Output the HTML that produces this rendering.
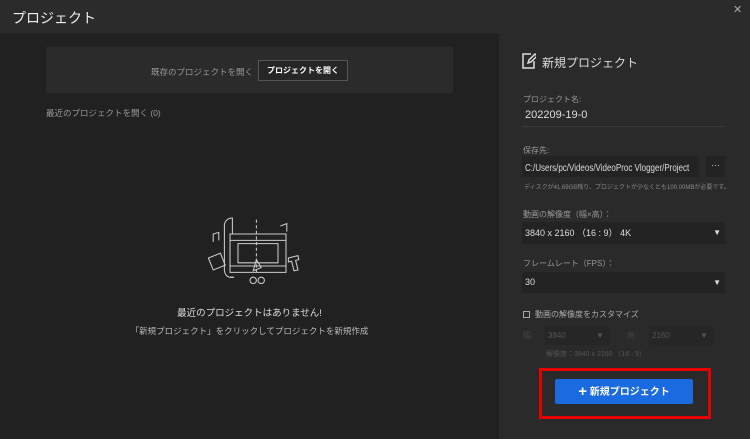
<!DOCTYPE html><html><head><meta charset="utf-8"><style>
*{margin:0;padding:0;box-sizing:border-box}
body{width:750px;height:439px;background:#212121;font-family:"Liberation Sans","Noto Sans CJK JP",sans-serif;color:#ccc;position:relative;overflow:hidden}
.a{position:absolute}
</style></head><body>
<div class="a" style="left:0;top:0;width:750px;height:33px;background:#2b2b2b"></div>
<div class="a" style="left:12px;top:8px;font-size:14px;color:#eee">プロジェクト</div>
<div class="a" style="left:733px;top:3px;font-size:11px;color:#aaa">✕</div>
<div class="a" style="left:499px;top:33px;width:251px;height:406px;background:#2a2a2a"></div>

<div class="a" style="left:46px;top:47px;width:407px;height:46px;background:#2b2b2b"></div>
<div class="a" style="left:151px;top:66px;font-size:8.5px;color:#999;white-space:nowrap">既存のプロジェクトを開く</div>
<div class="a" style="left:258px;top:60px;width:90px;height:21px;border:1px solid #555;background:#262626;color:#fff;font-size:8px;font-weight:bold;text-align:center;line-height:19px">プロジェクトを開く</div>
<div class="a" style="left:46px;top:107px;font-size:8.5px;color:#999">最近のプロジェクトを開く (0)</div>

<svg class="a" style="left:190px;top:210px" width="120" height="80" viewBox="0 0 140 100" fill="none" stroke="#ccc" stroke-width="1.3">
<path d="M45 30 h70 v48 h-70z"/><path d="M45 38h70M45 70h70"/><path d="M55 42h50v24h-50z"/>
<path d="M48 30 V10 q-8 0 -10 8 v58 q2 10 12 8 h-5"/><path d="M78 12v66" stroke-dasharray="4 3"/>
<path d="M78 62 l6 10 l-10 4z"/><circle cx="74" cy="88" r="4"/><circle cx="84" cy="88" r="4"/>
<path d="M18 60 l15 -6 l6 15 l-15 6z"/><path d="M118 60 l12 -3 l1 5 l-4 1 l3 12 l-5 1 l-3 -12 l-4 1z"/>
<path d="M24 40 v-10 l7 -2 v10"/><path d="M108 20 l8 -3 v10"/>
</svg>
<div class="a" style="left:0;width:499px;top:305px;text-align:center;font-size:9.5px;color:#ddd">最近のプロジェクトはありません!</div>
<div class="a" style="left:0;width:499px;top:325px;text-align:center;font-size:8.5px;color:#bbb">「新規プロジェクト」をクリックしてプロジェクトを新規作成</div>

<svg class="a" style="left:522px;top:53px" width="14" height="16" viewBox="0 0 14 16" fill="none" stroke="#ddd" stroke-width="1.5"><path d="M9 1H1v14h11V8"/><path d="M6 10l1-3 6-6 2 2-6 6z"/></svg>
<div class="a" style="left:542px;top:54px;font-size:12px;color:#ddd">新規プロジェクト</div>
<div class="a" style="left:523px;top:94px;font-size:8px;color:#999">プロジェクト名:</div>
<div class="a" style="left:525px;top:109px;font-size:11px;color:#ddd">202209-19-0</div>
<div class="a" style="left:522px;top:126px;width:203px;height:1px;background:#3a3a3a"></div>
<div class="a" style="left:523px;top:145px;font-size:8px;color:#999">保存先:</div>
<div class="a" style="left:522px;top:156px;width:177px;height:21px;background:#232323;line-height:21px;padding-left:3px;white-space:nowrap;overflow:hidden"><span style="display:inline-block;font-size:10px;color:#ddd;transform:scaleX(0.8);transform-origin:left">C:/Users/pc/Videos/VideoProc Vlogger/Project</span></div>
<div class="a" style="left:706px;top:156px;width:19px;height:21px;background:#232323;font-size:9px;color:#ccc;text-align:center;line-height:18px">···</div>
<div class="a" style="left:524px;top:182px;font-size:6px;color:#888;white-space:nowrap">ディスクが41.69GB残り、プロジェクトが少なくとも100.00MBが必要です。</div>
<div class="a" style="left:523px;top:209px;font-size:8px;color:#999">動画の解像度（幅×高）：</div>
<div class="a" style="left:522px;top:222px;width:203px;height:22px;background:#232323;font-size:9px;color:#ddd;line-height:22px;padding-left:3px">3840 x 2160 （16 : 9） 4K<span style="position:absolute;right:4px;font-size:8px">▼</span></div>
<div class="a" style="left:523px;top:258px;font-size:8px;color:#999">フレームレート（FPS）：</div>
<div class="a" style="left:522px;top:272px;width:203px;height:21px;background:#232323;font-size:9px;color:#ddd;line-height:21px;padding-left:3px">30<span style="position:absolute;right:4px;font-size:8px">▼</span></div>
<div class="a" style="left:523px;top:311px;width:7px;height:7px;border:1px solid #aaa"></div>
<div class="a" style="left:535px;top:309px;font-size:8px;color:#aaa">動画の解像度をカスタマイズ</div>
<div class="a" style="left:523px;top:330px;font-size:8px;color:#444">幅:</div>
<div class="a" style="left:545px;top:326px;width:64px;height:19px;background:#262626;font-size:8px;color:#555;line-height:19px;padding-left:3px">3840<span style="position:absolute;right:5px">▼</span></div>
<div class="a" style="left:627px;top:330px;font-size:8px;color:#444">高:</div>
<div class="a" style="left:649px;top:326px;width:64px;height:19px;background:#262626;font-size:8px;color:#555;line-height:19px;padding-left:3px">2160<span style="position:absolute;right:5px">▼</span></div>
<div class="a" style="left:546px;top:349px;font-size:7px;color:#555">解像度：3840 x 2160 （16 : 9）</div>
<div class="a" style="left:539px;top:368px;width:172px;height:51px;border:3px solid #e60000"></div>
<div class="a" style="left:555px;top:379px;width:138px;height:25px;background:#1a6be0;border-radius:2px;color:#fff;font-size:10px;font-weight:bold;text-align:center;line-height:25px"><span style="font-size:15px;vertical-align:-1px">+</span> 新規プロジェクト</div>
</body></html>
